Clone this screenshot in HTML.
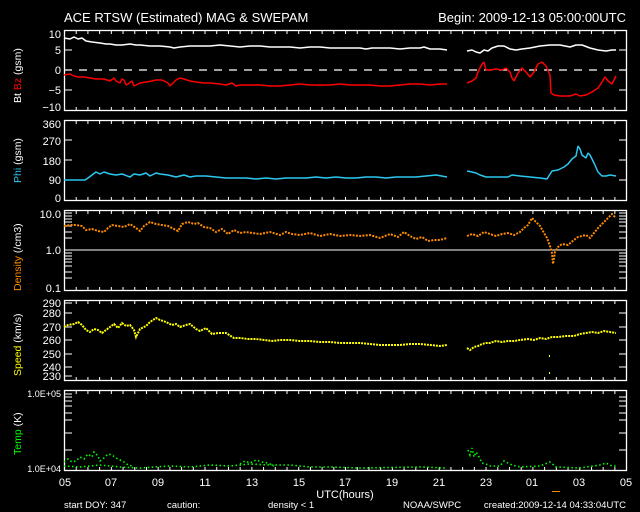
<!DOCTYPE html>
<html><head><meta charset="utf-8"><style>
html,body{margin:0;padding:0;background:#000;width:640px;height:512px;overflow:hidden}
svg{display:block}
text{font-family:"Liberation Sans",sans-serif;fill:#fff}
</style></head><body>
<svg width="640" height="512" viewBox="0 0 640 512" xmlns="http://www.w3.org/2000/svg">
<defs>
<pattern id="tk" x="64" y="0" width="11.71" height="512" patternUnits="userSpaceOnUse">
<rect x="0" y="0" width="1" height="512" fill="#fff"/>
</pattern>
</defs>
<text x="64" y="22" font-size="13">ACE RTSW (Estimated) MAG &amp; SWEPAM</text>
<text x="626" y="22" font-size="13" text-anchor="end">Begin: 2009-12-13 05:00:00UTC</text>

<g fill="none" stroke="#fff" stroke-width="1.3">
<rect x="64.5" y="30.5" width="562" height="80"/>
<rect x="64.5" y="120.5" width="562" height="80"/>
<rect x="64.5" y="210.5" width="562" height="80"/>
<rect x="64.5" y="300.5" width="562" height="80"/>
<rect x="64.5" y="390.5" width="562" height="80"/>
</g>
<g fill="#fff">
<rect x="64" y="31" width="563" height="3" fill="url(#tk)"/>
<rect x="64" y="107" width="563" height="3" fill="url(#tk)"/>
<rect x="64" y="121" width="563" height="3" fill="url(#tk)"/>
<rect x="64" y="197" width="563" height="3" fill="url(#tk)"/>
<rect x="64" y="211" width="563" height="3" fill="url(#tk)"/>
<rect x="64" y="287" width="563" height="3" fill="url(#tk)"/>
<rect x="64" y="301" width="563" height="3" fill="url(#tk)"/>
<rect x="64" y="377" width="563" height="3" fill="url(#tk)"/>
<rect x="64" y="391" width="563" height="3" fill="url(#tk)"/>
<rect x="64" y="467" width="563" height="3" fill="url(#tk)"/>
</g>
<g stroke="#fff" stroke-width="1">
<path d="M64 50h8M64 90h8M619 50h8M619 90h8M619 70h8"/>
<path d="M64 140h8M64 160h8M64 180h8M619 140h8M619 160h8M619 180h8"/>
<path d="M64 250h563M64 213h8M64 216h8M64 219h8M64 222h8M64 226h8M64 232h8M64 238h8M64 253h8M64 256h8M64 259h8M64 262h8M64 266h8M64 272h8M64 278h8M619 213h8M619 216h8M619 219h8M619 222h8M619 226h8M619 232h8M619 238h8M619 253h8M619 256h8M619 259h8M619 262h8M619 266h8M619 272h8M619 278h8"/>
<path d="M64 303h8M64 313h8M64 327h8M64 340h8M64 354h8M64 367h8M64 376h8M619 313h8M619 327h8M619 340h8M619 354h8M619 367h8"/>
<path d="M64 394h8M64 397h8M64 401h8M64 406h8M64 413h8M64 420h8M64 433h8M64 450h8M619 397h8M619 401h8M619 406h8M619 413h8M619 420h8M619 433h8M619 450h8"/>
</g>
<path d="M64 70H627" stroke="#fff" stroke-width="1.3" stroke-dasharray="8 7"/>

<g font-size="11" text-anchor="end">
<text x="61" y="38">10</text><text x="61" y="54">5</text><text x="61" y="74">0</text><text x="61" y="94">−5</text><text x="61" y="111">−10</text>
<text x="61" y="128">360</text><text x="61" y="145">270</text><text x="61" y="165">180</text><text x="61" y="184">90</text><text x="61" y="202">0</text>
<text x="61" y="218">10.0</text><text x="61" y="254">1.0</text><text x="61" y="292">0.1</text>
<text x="61" y="307">290</text><text x="61" y="317">280</text><text x="61" y="331">270</text><text x="61" y="344">260</text><text x="61" y="358">250</text><text x="61" y="371">240</text><text x="61" y="380">230</text>
<text x="61" y="397" font-size="9">1.0E+05</text><text x="61" y="472" font-size="9">1.0E+04</text>
</g>
<g font-size="10.5">
<text transform="translate(21,103) rotate(-90)">Bt <tspan fill="#f00">Bz</tspan> (gsm)</text>
<text transform="translate(21,183) rotate(-90)"><tspan fill="#2cc8f0">Phi</tspan> (gsm)</text>
<text transform="translate(21,291) rotate(-90)"><tspan fill="#ff8c00">Density</tspan> (/cm3)</text>
<text transform="translate(21,376) rotate(-90)"><tspan fill="#ff0">Speed</tspan> (km/s)</text>
<text transform="translate(21,455) rotate(-90)"><tspan fill="#0f0">Temp</tspan> (K)</text>
</g>

<g fill="none" stroke-width="1.5" stroke-linejoin="bevel">
<polyline stroke="#fff" points="64,38 70,39 74,37 78,39 82,38 86,41 92,42 100,43 106,44 110,44 116,45 122,45 130,44 136,45 140,45 150,46 160,46 170,47 174,48 180,47 190,46 200,46 210,46 220,45 230,46 240,47 250,46 260,46 270,47 280,47 290,47 300,48 310,47 320,47 330,48 340,48 350,48 360,48 366,49 372,48 380,48 390,48 400,49 410,48 420,48 424,47 430,49 440,49 447,50"/>
<polyline stroke="#fff" points="467,51 472,50 476,52 480,53 484,50 488,51 492,48 498,46 504,46 510,49 516,50 522,49 530,48 540,46 550,45 560,45 570,47 576,45 582,45 590,48 598,50 606,51 612,50 616,50"/>
<polyline stroke="#f00" points="64,75 70,74 74,76 78,77 84,77 90,78 96,79 104,79 110,81 114,78 116,81 120,83 122,79 124,80 126,85 128,84 132,81 134,86 136,85 140,83 146,82 152,81 156,80 162,80 168,83 170,86 172,84 176,80 180,78 184,79 190,81 196,82 204,83 210,83 220,84 226,85 232,83 236,86 240,85 250,85 260,85 270,86 280,86 290,85 300,84 310,85 320,85 330,85 340,84 350,85 360,85 370,85 380,86 390,86 400,85 410,84 420,84 430,85 440,84 447,84"/>
<polyline stroke="#f00" points="467,83 472,81 476,78 478,72 480,68 482,64 484,62 486,70 490,70 496,69 502,70 506,68 510,72 512,78 514,81 518,73 522,68 526,72 530,77 534,72 538,64 542,62 546,66 550,75 551,93 554,95 560,96 570,96 576,94 580,96 586,95 592,92 598,88 602,82 605,77 608,81 612,84 614,80 616,76"/>
<polyline stroke="#2cc8f0" points="64,180 85,180 88,178 92,175 96,172 100,174 104,172 110,174 116,175 122,174 130,177 134,174 140,175 146,173 150,176 156,173 160,174 168,175 176,177 184,175 190,177 196,176 206,176 216,177 226,178 236,178 246,178 256,179 266,178 276,179 286,178 296,178 306,178 316,177 326,178 336,177 346,178 356,178 366,177 376,177 386,178 396,177 406,177 416,177 426,176 436,175 447,177"/>
<polyline stroke="#2cc8f0" points="467,171 472,172 476,173 480,175 486,177 496,177 508,177 512,175 520,176 530,177 540,178 547,179 552,171 558,170 564,167 568,164 572,159 576,156 578,146 580,149 582,155 586,158 588,153 590,155 594,163 598,172 602,176 606,176 610,175 616,176"/>
</g>
<g fill="none" stroke-width="2" stroke-dasharray="2 1.3">
<polyline stroke="#ff8c00" points="64,226 70,225 76,225 82,226 86,230 92,229 98,231 104,232 108,228 112,225 118,226 124,227 130,224 136,228 140,231 144,226 150,222 156,224 162,225 168,226 174,229 178,231 182,224 188,222 194,224 198,223 204,227 210,228 216,232 222,229 228,234 234,230 240,233 246,232 252,233 260,234 270,232 280,235 286,232 292,234 300,235 310,233 320,236 330,234 340,236 350,235 360,236 370,235 380,238 390,234 398,237 404,232 410,236 416,239 422,237 428,241 434,240 440,240 447,238"/>
<polyline stroke="#ff8c00" points="467,236 472,234 478,236 484,232 490,234 496,236 502,234 508,233 514,235 520,232 524,228 528,225 532,218 536,222 540,226 544,233 547,238 550,246 552,253 553,264 555,252 558,247 562,244 568,245 574,240 578,237 582,236 586,235 590,238 594,233 598,228 602,224 606,220 610,216 612,214 616,218"/>
</g>
<g fill="none" stroke="#ff0" stroke-width="2" stroke-dasharray="2 1">
<polyline points="64,327 68,325 74,324 78,322 82,325 86,330 90,332 94,329 98,330 102,333 106,330 110,327 114,324 118,328 122,323 126,326 130,325 134,330 136,337 140,329 146,326 150,322 156,318 160,320 166,322 172,325 176,324 180,327 186,325 190,324 196,329 200,331 206,328 212,334 218,333 226,333 234,338 240,338 248,339 256,339 264,340 272,341 280,340 290,340 300,341 310,341 320,342 330,342 340,343 350,343 360,343 370,344 380,345 390,345 400,345 410,344 420,344 430,345 440,346 447,345"/>
<polyline points="467,348 470,350 474,347 478,346 482,344 486,343 490,343 496,341 502,342 508,341 514,341 520,340 528,339 534,340 540,338 546,339 552,337 558,337 566,336 574,336 580,334 586,333 592,332 598,333 604,331 610,332 616,333"/>
</g>
<rect x="549" y="355" width="1" height="2" fill="#ff0"/><rect x="549" y="372" width="1" height="2" fill="#ff0"/>
<g fill="none" stroke="#0f0" stroke-width="1.6" stroke-dasharray="1.5 2.5">
<polyline points="64,462 68,459 72,462 76,461 80,457 84,459 88,454 92,457 94,452 98,456 100,461 104,458 108,454 112,455 116,458 120,460 124,462 128,465 132,466"/>
<polyline points="64,466 80,467 100,465 120,467 140,468 170,466 190,467 210,465 230,466 250,464 270,465 290,465 310,467 330,467 360,468 420,467 447,468"/>
<polyline points="240,464 245,461 250,463 256,460 262,462 268,463 274,466"/>
<polyline points="468,450 470,455 472,448 474,457 476,452 478,455 480,459 482,463 486,464 490,466 500,466 504,461 508,463 512,465 520,467 540,466 550,462 556,467 580,468 600,465 606,463 612,466 616,466"/>
</g>
<rect x="552" y="491" width="8" height="1" fill="#ff8c00"/>

<g font-size="11" text-anchor="middle">
<text x="65" y="486">05</text><text x="111" y="486">07</text><text x="158" y="486">09</text><text x="205" y="486">11</text><text x="252" y="486">13</text><text x="299" y="486">15</text><text x="345" y="486">17</text><text x="392" y="486">19</text><text x="439" y="486">21</text><text x="486" y="486">23</text><text x="532" y="486">01</text><text x="579" y="486">03</text><text x="626" y="486">05</text>
<text x="345" y="498">UTC(hours)</text>
</g>
<g font-size="9.5">
<text x="64" y="508">start DOY: 347</text>
<text x="167" y="508">caution:</text>
<text x="268" y="508" fill="#ff8c00">density &lt; 1</text>
<text x="403" y="508">NOAA/SWPC</text>
<text x="626" y="508" text-anchor="end">created:2009-12-14 04:33:04UTC</text>
</g>
</svg>
</body></html>
